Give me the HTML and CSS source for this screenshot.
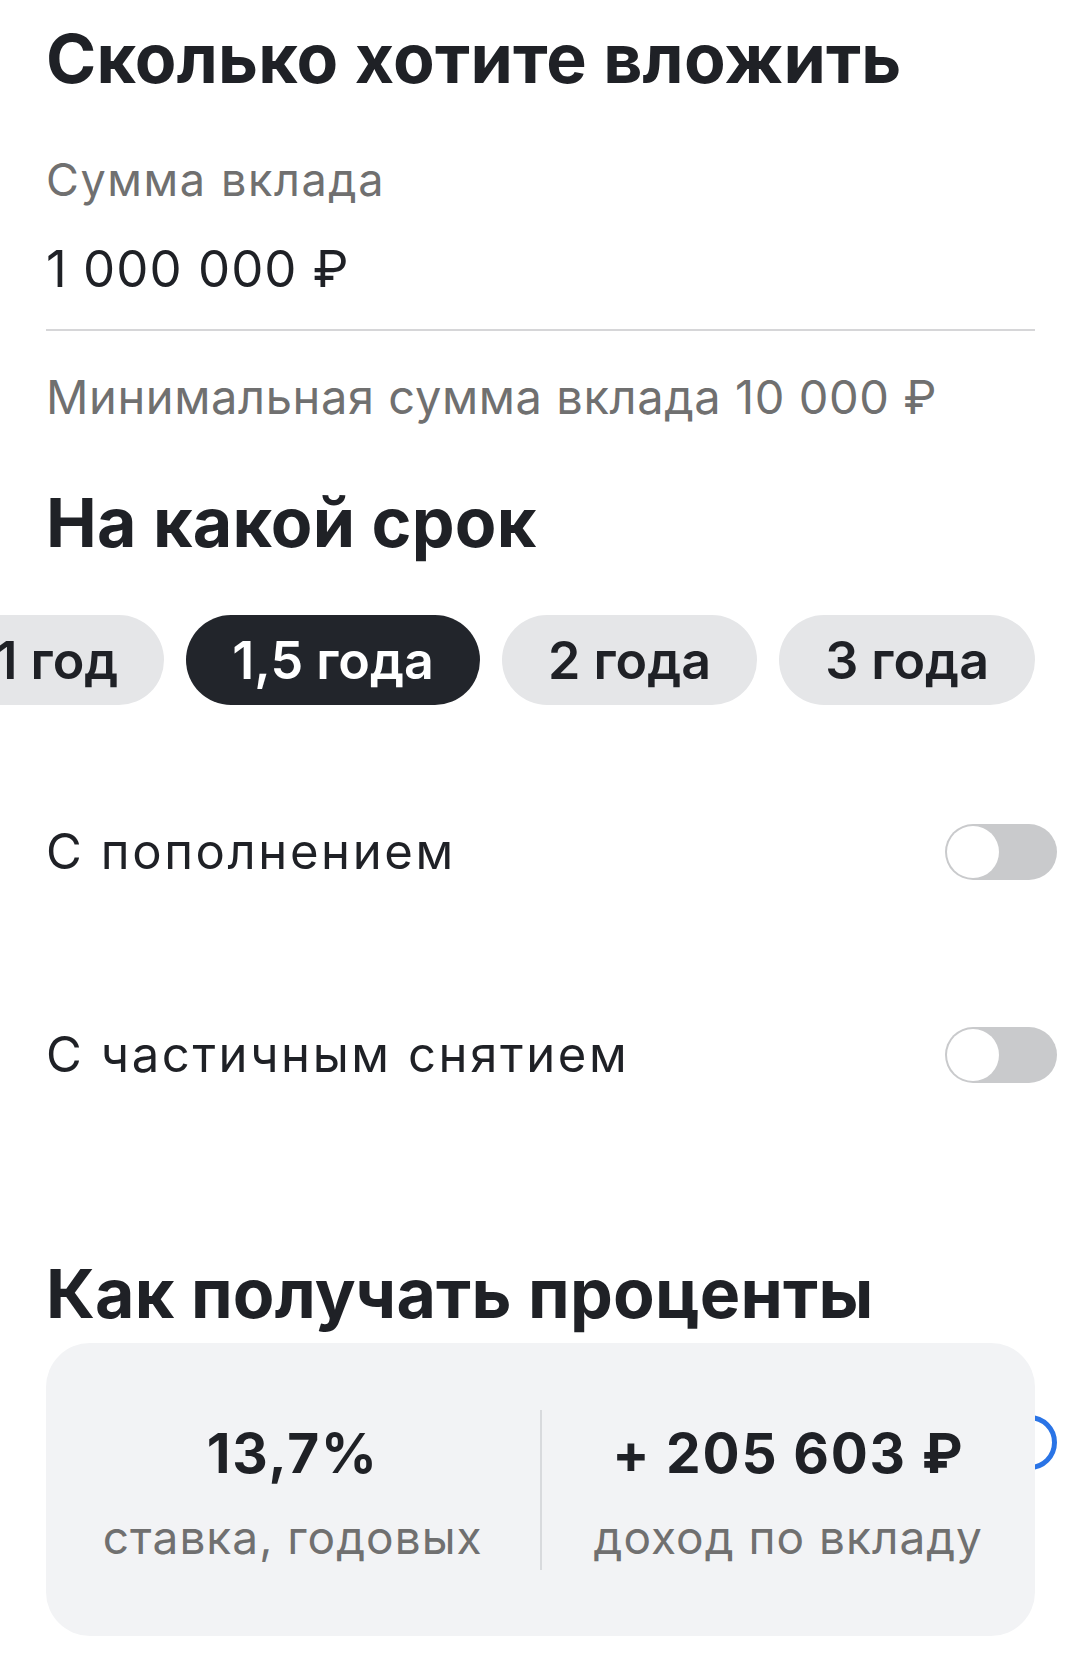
FILE: index.html
```html
<!DOCTYPE html>
<html lang="ru">
<head>
<meta charset="utf-8">
<title>Вклад</title>
<link rel="stylesheet" href="styles.css">
</head>
<body>
<main class="page">
  <h1 class="heading">Сколько хотите вложить</h1>
  <div class="field-label">Сумма вклада</div>
  <div class="field-value">1 000 000 ₽</div>
  <div class="divider"></div>
  <div class="hint">Минимальная сумма вклада 10 000 ₽</div>

  <h2 class="heading heading--term">На какой срок</h2>
  <div class="chips">
    <button class="chip">1 год</button>
    <button class="chip chip--active">1,5 года</button>
    <button class="chip">2 года</button>
    <button class="chip">3 года</button>
  </div>

  <div class="option option--first">
    <span class="option-label">С пополнением</span>
    <span class="toggle"><span class="knob"></span></span>
  </div>
  <div class="option option--second">
    <span class="option-label">С частичным снятием</span>
    <span class="toggle"><span class="knob"></span></span>
  </div>

  <h2 class="heading heading--interest">Как получать проценты</h2>
  <div class="card-wrap">
    <span class="spinner"></span>
    <div class="card">
      <div class="stat">
        <div class="stat-value">13,7%</div>
        <div class="stat-label">ставка, годовых</div>
      </div>
      <div class="card-divider"></div>
      <div class="stat">
        <div class="stat-value">+ 205 603 ₽</div>
        <div class="stat-label">доход по вкладу</div>
      </div>
    </div>
  </div>
</main>
</body>
</html>
```

FILE: styles.css
```css
* {
  box-sizing: border-box;
}

html, body {
  margin: 0;
  padding: 0;
  background: #ffffff;
}

body {
  font-family: "Inter", "Noto Sans", "Liberation Sans", sans-serif;
  color: #1f2126;
  width: 1080px;
  height: 1656px;
  overflow: hidden;
}

.page {
  padding: 18px 45px 0 46px;
}

.heading {
  margin: 0;
  font-size: 68px;
  line-height: 80px;
  font-weight: 700;
  letter-spacing: 0.2px;
  color: #1f2126;
}

.field-label {
  margin-top: 52px;
  font-size: 45px;
  line-height: 60px;
  letter-spacing: 1.6px;
  color: #707070;
}

.field-value {
  margin-top: 29px;
  font-size: 51px;
  line-height: 60px;
  letter-spacing: 1px;
  color: #1f2126;
}

.divider {
  margin-top: 30px;
  height: 2px;
  background: #d6d6d8;
}

.hint {
  margin-top: 36px;
  font-size: 47px;
  line-height: 60px;
  letter-spacing: 0.6px;
  color: #707070;
}

.heading--term {
  margin-top: 55px;
}

.chips {
  margin-top: 53px;
  display: flex;
  justify-content: flex-end;
  gap: 22px;
}

.chip {
  flex: none;
  height: 90px;
  padding: 0 46px;
  border: none;
  border-radius: 45px;
  background: #e5e6e8;
  color: #1f2126;
  font-family: inherit;
  font-size: 52px;
  font-weight: 600;
  letter-spacing: 0px;
}

.chip--active {
  background: #22252b;
  color: #ffffff;
}

.option {
  display: flex;
  align-items: center;
  justify-content: space-between;
  height: 56px;
  margin-right: -22px;
}

.option--first {
  margin-top: 119px;
}

.option--second {
  margin-top: 147px;
}

.option-label {
  font-size: 49px;
  line-height: 56px;
  letter-spacing: 2.6px;
  color: #1f2126;
}

.toggle {
  position: relative;
  width: 112px;
  height: 56px;
  border-radius: 28px;
  background: #c9cacc;
}

.knob {
  position: absolute;
  left: 2px;
  top: 2px;
  width: 52px;
  height: 52px;
  border-radius: 50%;
  background: #ffffff;
}

.heading--interest {
  margin-top: 170px;
}

.card-wrap {
  position: relative;
  margin-top: 10px;
}

.spinner {
  position: absolute;
  left: 956px;
  top: 72px;
  width: 55px;
  height: 55px;
  border: 5px solid #2a74e6;
  border-radius: 50%;
}

.card {
  position: relative;
  display: grid;
  grid-template-columns: 1fr 2px 1fr;
  align-items: center;
  height: 293px;
  background: #f2f3f5;
  border-radius: 44px;
}

.stat {
  padding-top: 10px;
  text-align: center;
}

.stat-value {
  font-size: 55px;
  line-height: 60px;
  font-weight: 700;
  letter-spacing: 1.8px;
  color: #1f2126;
}

.stat-label {
  margin-top: 24px;
  font-size: 46px;
  line-height: 60px;
  letter-spacing: 1px;
  color: #707070;
}

.card-divider {
  width: 2px;
  height: 160px;
  background: #d8dadd;
}
```
